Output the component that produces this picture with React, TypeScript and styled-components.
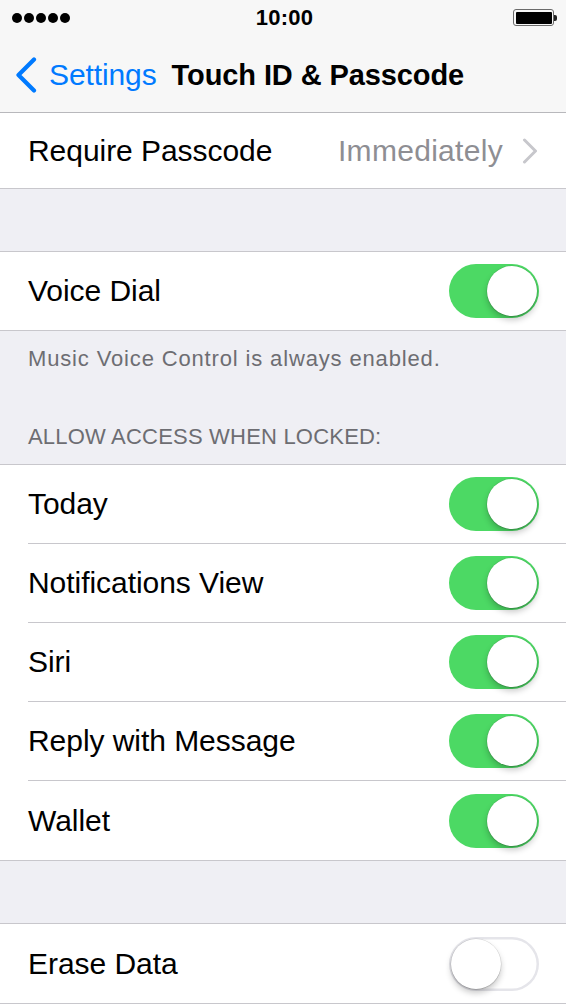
import React from "react";
import styled, { createGlobalStyle } from "styled-components";

const GlobalStyle = createGlobalStyle`
  html, body {
    margin: 0;
    padding: 0;
    background: #efeff4;
    font-family: "Liberation Sans", Arial, Helvetica, sans-serif;
    -webkit-font-smoothing: antialiased;
  }
  * { box-sizing: border-box; }
`;

const Screen = styled.div`
  width: 566px;
  min-height: 1004px;
  background: #efeff4;
  overflow: hidden;
`;

const StatusBar = styled.div`
  height: 35px;
  background: #f7f7f7;
  display: grid;
  grid-template-columns: 1fr auto 1fr;
  align-items: center;
  padding: 0 9px 0 12px;
`;

const Signal = styled.div`
  display: flex;
  gap: 2px;
  align-items: center;
`;

const Dot = styled.span`
  width: 10px;
  height: 10px;
  border-radius: 50%;
  background: #000;
`;

const Time = styled.div`
  font-size: 22px;
  font-weight: 700;
  color: #000;
  letter-spacing: 0.2px;
  line-height: 1;
`;

const BatteryWrap = styled.div`
  display: flex;
  justify-content: flex-end;
  align-items: center;
`;

const BatteryBody = styled.div`
  width: 41px;
  height: 17px;
  border: 1.5px solid #6b6b6b;
  border-radius: 3px;
  padding: 1.5px;
  display: flex;
`;

const BatteryFill = styled.div`
  flex: 1;
  background: #000;
  border-radius: 1px;
`;

const BatteryTip = styled.div`
  width: 3px;
  height: 6px;
  background: #222;
  border-radius: 0 2px 2px 0;
`;

const NavBar = styled.div`
  height: 78px;
  background: #f7f7f7;
  border-bottom: 1px solid #b8b8bc;
  display: flex;
  align-items: center;
  padding-left: 14px;
  padding-top: 3px;
`;

const BackButton = styled.div`
  display: flex;
  align-items: center;
  gap: 11px;
  color: #007aff;
  font-size: 30px;
  letter-spacing: -0.1px;
  margin-right: 15px;
`;

const Title = styled.div`
  font-size: 29px;
  font-weight: 700;
  color: #000;
  letter-spacing: -0.1px;
`;

const Group = styled.div<{ $top?: boolean }>`
  background: #fff;
  border-top: ${(p) => (p.$top ? "1px solid #c8c7cc" : "none")};
  border-bottom: 1px solid #c8c7cc;
`;

const Row = styled.div`
  padding-left: 28px;
`;

const RowInner = styled.div<{ $height: number; $sep?: boolean }>`
  height: ${(p) => p.$height}px;
  display: flex;
  align-items: center;
  justify-content: space-between;
  padding-right: 27px;
  border-bottom: ${(p) => (p.$sep ? "1px solid #c8c7cc" : "none")};
`;

const Label = styled.span`
  font-size: 30px;
  color: #000;
  letter-spacing: -0.05px;
`;

const Detail = styled.div`
  display: flex;
  align-items: center;
  gap: 19px;
  color: #8e8e93;
  font-size: 30px;
  letter-spacing: 0.3px;
  margin-right: 1px;
`;

const Spacer = styled.div<{ $h: number }>`
  height: ${(p) => p.$h}px;
`;

const FooterText = styled.div`
  padding: 14px 28px 0;
  font-size: 22px;
  line-height: 28px;
  color: #6d6d72;
  letter-spacing: 0.85px;
`;

const SectionHeader = styled.div`
  padding: 50px 28px 13px;
  font-size: 22px;
  line-height: 28px;
  color: #6d6d72;
  letter-spacing: 0.2px;
  text-transform: uppercase;
`;

const Track = styled.div<{ $on: boolean }>`
  width: 90px;
  height: 54px;
  border-radius: 27px;
  display: flex;
  align-items: center;
  justify-content: ${(p) => (p.$on ? "flex-end" : "flex-start")};
  padding: 2px;
  background: ${(p) => (p.$on ? "#4cd964" : "#fff")};
  box-shadow: ${(p) => (p.$on ? "none" : "inset 0 0 0 2.5px #e5e5ea")};
`;

const Knob = styled.div`
  width: 50px;
  height: 50px;
  border-radius: 50%;
  background: #fff;
  box-shadow: 0 4px 6px rgba(0, 0, 0, 0.22), 0 0 0 0.5px rgba(0, 0, 0, 0.12),
    0 1px 1px rgba(0, 0, 0, 0.12);
`;

const Toggle = ({ on }: { on: boolean }) => (
  <Track $on={on}>
    <Knob />
  </Track>
);

const BackChevron = () => (
  <svg width="24" height="36" viewBox="0 0 24 36" aria-hidden>
    <polyline
      points="20,2.5 4.5,18 20,33.5"
      fill="none"
      stroke="#007aff"
      strokeWidth="4.2"
      strokeLinecap="round"
      strokeLinejoin="round"
    />
  </svg>
);

const Disclosure = () => (
  <svg width="16" height="26" viewBox="0 0 16 26" aria-hidden>
    <polyline
      points="2.5,2 13.5,13 2.5,24"
      fill="none"
      stroke="#c7c7cc"
      strokeWidth="3"
      strokeLinecap="round"
      strokeLinejoin="round"
    />
  </svg>
);

const lockedItems = [
  "Today",
  "Notifications View",
  "Siri",
  "Reply with Message",
  "Wallet",
];

export default function App() {
  return (
    <>
      <GlobalStyle />
      <Screen>
        <StatusBar>
          <Signal>
            {[0, 1, 2, 3, 4].map((i) => (
              <Dot key={i} />
            ))}
          </Signal>
          <Time>10:00</Time>
          <BatteryWrap>
            <BatteryBody>
              <BatteryFill />
            </BatteryBody>
            <BatteryTip />
          </BatteryWrap>
        </StatusBar>

        <NavBar>
          <BackButton>
            <BackChevron />
            <span>Settings</span>
          </BackButton>
          <Title>Touch ID &amp; Passcode</Title>
        </NavBar>

        <Group>
          <Row>
            <RowInner $height={75}>
              <Label>Require Passcode</Label>
              <Detail>
                <span>Immediately</span>
                <Disclosure />
              </Detail>
            </RowInner>
          </Row>
        </Group>

        <Spacer $h={62} />

        <Group $top>
          <Row>
            <RowInner $height={78}>
              <Label>Voice Dial</Label>
              <Toggle on />
            </RowInner>
          </Row>
        </Group>

        <FooterText>Music Voice Control is always enabled.</FooterText>
        <SectionHeader>Allow Access When Locked:</SectionHeader>

        <Group $top>
          {lockedItems.map((item, i) => (
            <Row key={item}>
              <RowInner $height={79} $sep={i < lockedItems.length - 1}>
                <Label>{item}</Label>
                <Toggle on />
              </RowInner>
            </Row>
          ))}
        </Group>

        <Spacer $h={62} />

        <Group $top>
          <Row>
            <RowInner $height={79}>
              <Label>Erase Data</Label>
              <Toggle on={false} />
            </RowInner>
          </Row>
        </Group>
      </Screen>
    </>
  );
}
